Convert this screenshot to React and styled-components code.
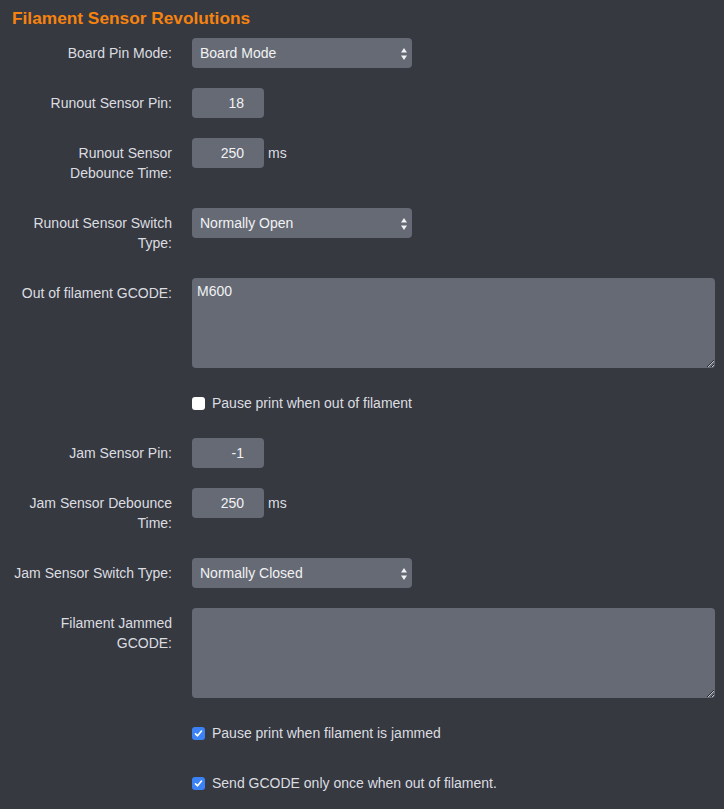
import styled, { createGlobalStyle } from 'styled-components';

const GlobalStyle = createGlobalStyle`
  html, body {
    margin: 0;
    padding: 0;
    background: #363940;
  }
  body {
    font-family: "Liberation Sans", Arial, sans-serif;
    font-size: 14px;
    line-height: 20px;
    color: #dcdde0;
  }
`;

const Page = styled.div`
  padding: 8px 12px 10px 12px;
  min-height: 809px;
  box-sizing: border-box;
`;

const Title = styled.h3`
  margin: 0 0 10px 0;
  font-size: 17.3px;
  line-height: 20px;
  font-weight: 700;
  color: #f7830f;
`;

const Group = styled.div`
  display: flex;
  align-items: flex-start;
  gap: 20px;
  margin-bottom: 20px;
`;

const Label = styled.label`
  width: 160px;
  flex: none;
  padding: 5px 0;
  text-align: right;
  color: #dcdde0;
`;

const Controls = styled.div`
  display: flex;
  align-items: flex-start;
  gap: 4px;
  flex: 1;
`;

const SelectWrap = styled.div`
  position: relative;
  width: 220px;
  height: 30px;
`;

const Select = styled.select`
  appearance: none;
  -webkit-appearance: none;
  width: 100%;
  height: 30px;
  box-sizing: border-box;
  border: none;
  border-radius: 4px;
  background: #656a75;
  color: #f2f2f3;
  font-family: inherit;
  font-size: 14px;
  padding: 0 24px 0 8px;
  outline: none;
`;

const Arrows = styled.svg`
  position: absolute;
  right: 5px;
  top: 10px;
  pointer-events: none;
`;

const NumInput = styled.input`
  width: 72px;
  height: 30px;
  box-sizing: border-box;
  border: none;
  border-radius: 4px;
  background: #656a75;
  color: #f2f2f3;
  font-family: inherit;
  font-size: 14px;
  text-align: right;
  padding: 0 20px 0 6px;
  outline: none;
`;

const Unit = styled.span`
  padding-top: 5px;
  color: #dcdde0;
`;

const TextArea = styled.textarea`
  width: 523px;
  height: 90px;
  box-sizing: border-box;
  border: none;
  border-radius: 4px;
  background: #656a75;
  color: #f2f2f3;
  font-family: inherit;
  font-size: 14px;
  line-height: 20px;
  padding: 3px 5px;
  outline: none;
  resize: vertical;
  display: block;
`;

const CheckRow = styled.label`
  display: flex;
  align-items: center;
  gap: 7px;
  margin-left: 180px;
  padding: 5px 0;
  margin-bottom: 20px;
  color: #dcdde0;
`;

const Box = styled.span`
  width: 13px;
  height: 13px;
  box-sizing: border-box;
  border-radius: 3px;
  background: ${(p) => (p.$checked ? '#3b82f6' : '#ffffff')};
  display: inline-flex;
  align-items: center;
  justify-content: center;
`;

function SelectField({ value }) {
  return (
    <SelectWrap>
      <Select defaultValue={value}>
        <option>{value}</option>
      </Select>
      <Arrows width="6" height="12" viewBox="0 0 6 12">
        <path d="M3 0 L6 4.5 L0 4.5 Z M0 7.5 L6 7.5 L3 12 Z" fill="#f2f2f3" />
      </Arrows>
    </SelectWrap>
  );
}

function Check({ checked, children }) {
  return (
    <CheckRow>
      <Box $checked={checked}>
        {checked && (
          <svg width="9" height="9" viewBox="0 0 9 9">
            <path d="M1.5 4.8 L3.6 6.8 L7.5 2" stroke="#fff" strokeWidth="1.6" fill="none" strokeLinecap="round" strokeLinejoin="round" />
          </svg>
        )}
      </Box>
      {children}
    </CheckRow>
  );
}

export default function App() {
  return (
    <>
      <GlobalStyle />
      <Page>
        <Title>Filament Sensor Revolutions</Title>

        <Group>
          <Label>Board Pin Mode:</Label>
          <Controls>
            <SelectField value="Board Mode" />
          </Controls>
        </Group>

        <Group>
          <Label>Runout Sensor Pin:</Label>
          <Controls>
            <NumInput defaultValue="18" />
          </Controls>
        </Group>

        <Group>
          <Label>Runout Sensor Debounce Time:</Label>
          <Controls>
            <NumInput defaultValue="250" />
            <Unit>ms</Unit>
          </Controls>
        </Group>

        <Group>
          <Label>Runout Sensor Switch Type:</Label>
          <Controls>
            <SelectField value="Normally Open" />
          </Controls>
        </Group>

        <Group>
          <Label>Out of filament GCODE:</Label>
          <Controls>
            <TextArea defaultValue="M600" />
          </Controls>
        </Group>

        <Check checked={false}>Pause print when out of filament</Check>

        <Group>
          <Label>Jam Sensor Pin:</Label>
          <Controls>
            <NumInput defaultValue="-1" />
          </Controls>
        </Group>

        <Group>
          <Label>Jam Sensor Debounce Time:</Label>
          <Controls>
            <NumInput defaultValue="250" />
            <Unit>ms</Unit>
          </Controls>
        </Group>

        <Group>
          <Label>Jam Sensor Switch Type:</Label>
          <Controls>
            <SelectField value="Normally Closed" />
          </Controls>
        </Group>

        <Group>
          <Label>Filament Jammed GCODE:</Label>
          <Controls>
            <TextArea defaultValue="" />
          </Controls>
        </Group>

        <Check checked>Pause print when filament is jammed</Check>
        <Check checked>Send GCODE only once when out of filament.</Check>
      </Page>
    </>
  );
}
